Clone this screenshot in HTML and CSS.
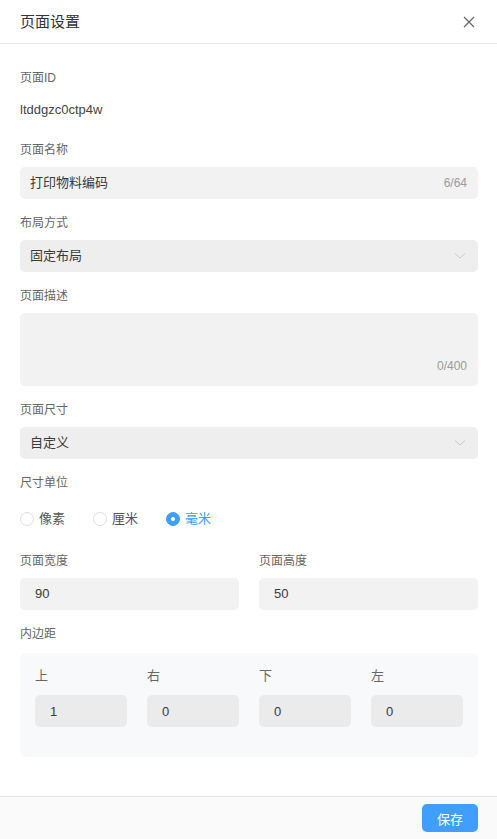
FILE: index.html
```html
<!DOCTYPE html>
<html lang="zh">
<head>
<meta charset="utf-8">
<link rel="stylesheet" href="styles.css">
</head>
<body>
<div class="dialog">
  <div class="header">
    <div class="title">页面设置</div>
    <svg class="close" width="12" height="12" viewBox="0 0 12 12"><path d="M1 1L11 11M11 1L1 11" stroke="#666" stroke-width="1.2" fill="none"/></svg>
  </div>
  <div class="body">
    <div class="label">页面ID</div>
    <div class="value">ltddgzc0ctp4w</div>

    <div class="label">页面名称</div>
    <div class="input"><span class="text">打印物料编码</span><span class="count">6/64</span></div>

    <div class="label">布局方式</div>
    <div class="input select"><span class="text">固定布局</span>
      <svg class="chev" width="12" height="8" viewBox="0 0 12 8"><path d="M1 1.5L6 6L11 1.5" stroke="#c8c8c8" stroke-width="1" fill="none"/></svg>
    </div>

    <div class="label">页面描述</div>
    <div class="textarea"><span class="count">0/400</span></div>

    <div class="label">页面尺寸</div>
    <div class="input select"><span class="text">自定义</span>
      <svg class="chev" width="12" height="8" viewBox="0 0 12 8"><path d="M1 1.5L6 6L11 1.5" stroke="#c8c8c8" stroke-width="1" fill="none"/></svg>
    </div>

    <div class="label">尺寸单位</div>
    <div class="radios">
      <div class="radio"><span class="dot"></span>像素</div>
      <div class="radio"><span class="dot"></span>厘米</div>
      <div class="radio on"><span class="dot"></span>毫米</div>
    </div>

    <div class="pair">
      <div class="col">
        <div class="label">页面宽度</div>
        <div class="input num"><span class="text">90</span></div>
      </div>
      <div class="col">
        <div class="label">页面高度</div>
        <div class="input num"><span class="text">50</span></div>
      </div>
    </div>

    <div class="label pad-label">内边距</div>
    <div class="padbox">
      <div class="pcol"><div class="plabel">上</div><div class="pinput">1</div></div>
      <div class="pcol"><div class="plabel">右</div><div class="pinput">0</div></div>
      <div class="pcol"><div class="plabel">下</div><div class="pinput">0</div></div>
      <div class="pcol"><div class="plabel">左</div><div class="pinput">0</div></div>
    </div>
  </div>
  <div class="footer">
    <button class="save">保存</button>
  </div>
</div>
</body>
</html>
```
FILE: styles.css
```css
* { box-sizing: border-box; }
html, body { margin: 0; padding: 0; background: #fff; }
body {
  font-family: "Liberation Sans", "Noto Sans CJK SC", sans-serif;
  color: #333;
  width: 497px;
  height: 839px;
  overflow: hidden;
}
.dialog { display: flex; flex-direction: column; height: 839px; }
.header {
  height: 44px;
  flex: none;
  border-bottom: 1px solid #e4e4e4;
  display: flex;
  align-items: center;
  justify-content: space-between;
  padding: 0 22px 0 20px;
}
.title { font-size: 15px; color: #333; line-height: 20px; }
.close { display: block; }
.body { flex: 1; padding: 25px 19px 0 20px; display: flex; flex-direction: column; }
.label { font-size: 12px; color: #666; line-height: 18px; height: 18px; margin-bottom: 8px; }
.value { font-size: 13px; color: #444; line-height: 18px; height: 18px; margin-top: 6px; margin-bottom: 22px; }
.input {
  height: 32px;
  flex: none;
  background: #f2f2f2;
  border-radius: 5px;
  display: flex;
  align-items: center;
  justify-content: space-between;
  padding: 0 11px 0 10px;
  font-size: 13px;
  line-height: 18px;
  margin-bottom: 15px;
}
.input .text { color: #3a3a3a; }
.count { font-size: 12px; color: #9a9a9a; line-height: 16px; }
.select { background: #eeeeee; padding-right: 12px; }
.select .chev { display: block; }
.textarea {
  height: 73px;
  flex: none;
  background: #f2f2f2;
  border-radius: 5px;
  display: flex;
  align-items: flex-end;
  justify-content: flex-end;
  padding: 0 11px 12px 0;
  margin-bottom: 15px;
}
.radios { display: flex; margin-top: 10px; margin-bottom: 24px; font-size: 13px; color: #555; height: 18px; line-height: 18px; align-items: center; }
.radio { display: flex; align-items: center; margin-right: 28px; }
.radio .dot {
  width: 14px; height: 14px; border-radius: 50%;
  border: 1px solid #dcdfe6; background: #fff;
  margin-right: 5px; position: relative;
}
.radio.on { color: #409eff; }
.radio.on .dot { background: #409eff; border-color: #409eff; }
.radio.on .dot::after {
  content: ""; position: absolute; left: 4px; top: 4px;
  width: 4px; height: 4px; border-radius: 50%; background: #fff;
}
.pair { display: flex; gap: 20px; }
.col { flex: 1; }
.num { padding-left: 15px; }
.pad-label { margin-bottom: 10px; }
.padbox {
  background: #f8f9fa;
  border-radius: 6px;
  padding: 14px 15px 0 15px;
  display: flex;
  gap: 20px;
  height: 104px;
  flex: none;
}
.pcol { flex: 1; }
.plabel { font-size: 13px; color: #666; line-height: 18px; height: 18px; margin-bottom: 10px; }
.pinput {
  height: 32px; background: #ebebeb; border-radius: 5px;
  font-size: 13px; color: #3a3a3a; display: flex; align-items: center; padding-left: 15px;
}
.footer {
  height: 43px;
  flex: none;
  border-top: 1px solid #e4e4e4;
  background: #fafafa;
  display: flex;
  align-items: center;
  justify-content: flex-end;
  padding: 0 19px 0 0;
}
.save {
  width: 56px; height: 28px;
  border: none; border-radius: 5px;
  background: #409eff; color: #fff;
  font-family: "Noto Sans CJK SC", sans-serif; font-size: 13px;
  padding: 0;
}
```
